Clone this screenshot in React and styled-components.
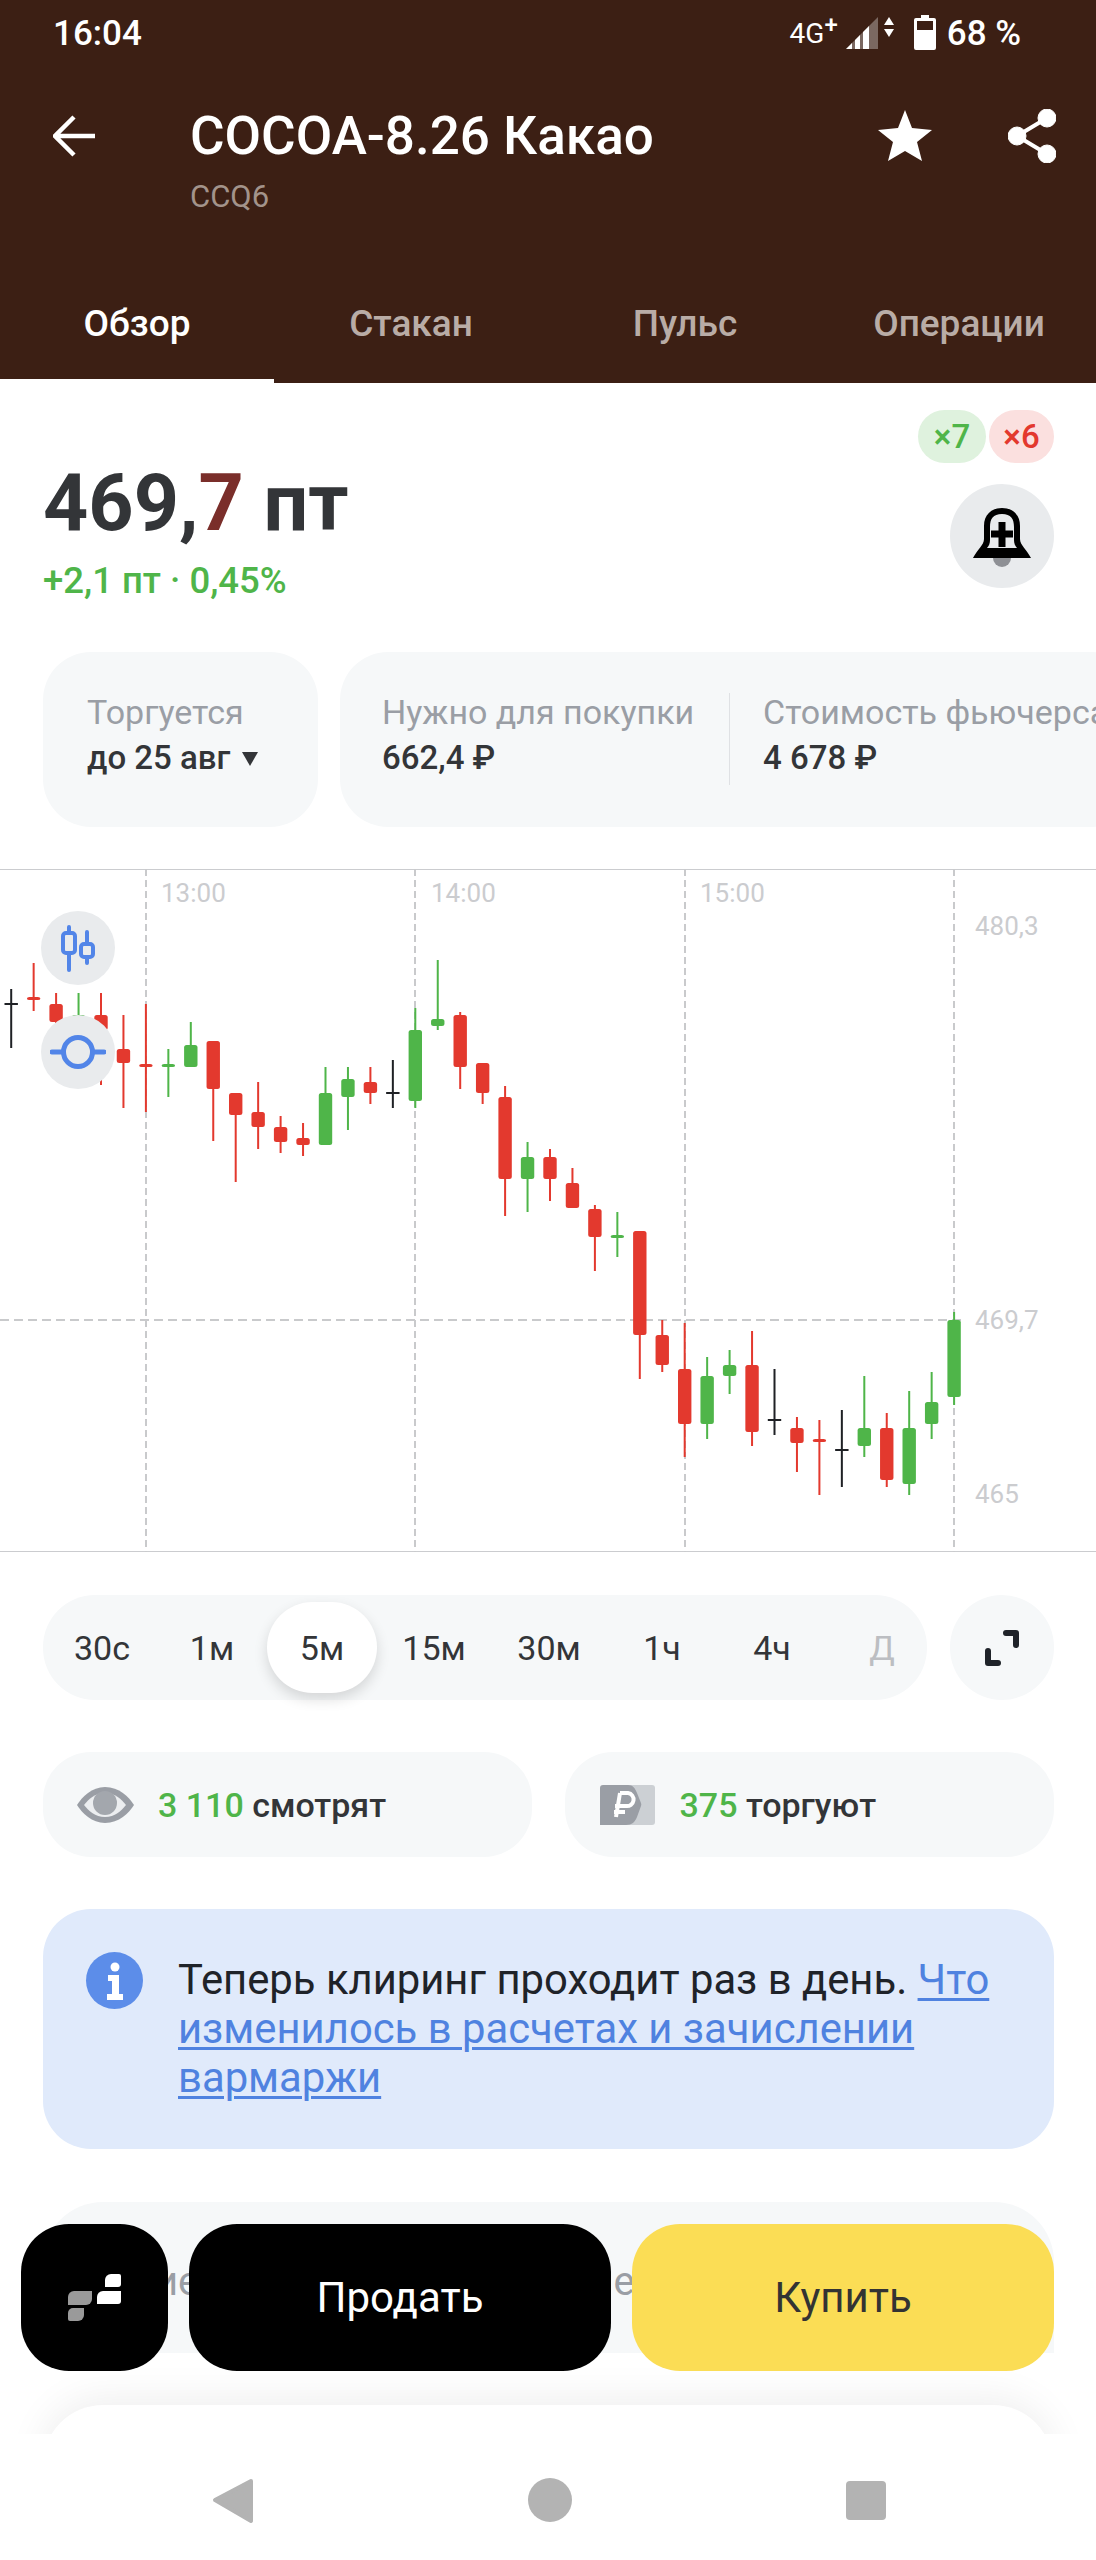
import React from 'react';
import styled, { createGlobalStyle } from 'styled-components';

const GlobalStyle = createGlobalStyle`
  html, body {
    margin: 0;
    padding: 0;
    background: #fff;
    font-family: Roboto, "Noto Sans", sans-serif;
  }
  * { box-sizing: border-box; }
`;

const BROWN = '#3c1f14';
const GREEN = '#4fb549';
const RED = '#e3392e';
const GRAY_BG = '#f6f8f9';

const Page = styled.div`
  position: relative;
  width: 1096px;
  height: 2560px;
  overflow: hidden;
  display: flex;
  flex-direction: column;
  background: #fff;
`;

const Scroll = styled.main`
  flex: 1;
  min-height: 0;
  overflow: hidden;
`;

const Header = styled.header`
  height: 383px;
  background: ${BROWN};
  color: #fff;
  display: flex;
  flex-direction: column;
`;

const StatusBar = styled.div`
  height: 66px;
  padding: 0 75px 0 53px;
  display: flex;
  align-items: center;
  justify-content: space-between;
  font-size: 35px;
  font-weight: 500;
`;

const StatusRight = styled.div`
  display: flex;
  align-items: center;
`;

const NetLabel = styled.span`
  font-size: 28px;
  font-weight: 400;
  margin-right: 8px;
  sup {
    font-size: 24px;
    line-height: 0;
    font-weight: 500;
  }
`;

const TitleBar = styled.div`
  height: 197px;
  padding: 42px 40px 0 53px;
  display: flex;
  align-items: flex-start;
`;

const BackButton = styled.div`
  width: 137px;
  height: 56px;
  flex: none;
  display: flex;
  align-items: center;
`;

const TitleBox = styled.div`
  flex: 1;
`;

const Title = styled.h1`
  margin: 0;
  font-size: 53px;
  line-height: 56px;
  font-weight: 500;
`;

const Ticker = styled.div`
  margin-top: 16px;
  font-size: 31px;
  line-height: 34px;
  color: #a3938b;
`;

const TitleActions = styled.div`
  display: flex;
  align-items: center;
  gap: 76px;
  height: 56px;
`;

const Tabs = styled.nav`
  position: relative;
  height: 120px;
  display: grid;
  grid-template-columns: repeat(4, 1fr);
`;

const Tab = styled.div`
  position: relative;
  display: flex;
  align-items: center;
  justify-content: center;
  font-size: 37px;
  font-weight: 500;
  color: ${p => (p.$active ? '#fff' : '#b9aca6')};
  &::after {
    content: '';
    display: ${p => (p.$active ? 'block' : 'none')};
    position: absolute;
    left: 0;
    right: 0;
    bottom: 0;
    height: 4px;
    background: #fff;
  }
`;

const Summary = styled.section`
  height: 269px;
  padding: 27px 42px 0 43px;
  display: flex;
  justify-content: space-between;
`;

const PriceBox = styled.div`
  padding-top: 48px;
`;

const Price = styled.div`
  font-size: 79px;
  line-height: 90px;
  font-weight: 700;
  color: #333538;
  span {
    color: #7a2e2a;
  }
`;

const Change = styled.div`
  margin-top: 13px;
  font-size: 36.5px;
  line-height: 40px;
  font-weight: 500;
  color: ${GREEN};
`;

const SideBox = styled.div`
  display: flex;
  flex-direction: column;
  align-items: flex-end;
  gap: 21px;
`;

const Badges = styled.div`
  display: flex;
  gap: 3px;
`;

const Badge = styled.div`
  width: ${p => (p.$up ? 68 : 65)}px;
  height: 53px;
  border-radius: 27px;
  display: flex;
  align-items: center;
  justify-content: center;
  font-size: 33px;
  font-weight: 500;
  color: ${p => (p.$up ? GREEN : RED)};
  background: ${p => (p.$up ? '#dff2de' : '#fbe0df')};
`;

const RoundButton = styled.div`
  width: 104px;
  height: ${p => p.$h || 104}px;
  border-radius: 52px;
  flex: none;
  display: flex;
  align-items: center;
  justify-content: center;
  background: ${p => p.$bg || '#e9ebed'};
`;

const InfoRow = styled.section`
  height: 175px;
  padding-left: 43px;
  display: flex;
  gap: 22px;
  overflow: hidden;
`;

const InfoCard = styled.div`
  flex: none;
  height: 175px;
  padding: 38px 0 0 ${p => p.$pad}px;
  width: ${p => p.$w}px;
  border-radius: 48px;
  background: ${GRAY_BG};
  display: flex;
`;

const InfoCell = styled.div`
  width: ${p => p.$w}px;
  flex: none;
  ${p => p.$split && `
    border-left: 1px solid #dfe1e4;
    padding-left: 33px;
    height: 92px;
    margin-top: 3px;
  `}
`;

const InfoLabel = styled.div`
  font-size: 34px;
  line-height: 45px;
  color: #9a9ea5;
  margin-top: ${p => (p.$split ? -3 : 0)}px;
  white-space: nowrap;
`;

const InfoValue = styled.div`
  font-size: 33px;
  line-height: 45px;
  font-weight: 500;
  color: #333538;
  white-space: nowrap;
  display: flex;
  align-items: center;
  gap: 12px;
`;

const Caret = styled.i`
  display: block;
  width: 0;
  height: 0;
  border-left: 8px solid transparent;
  border-right: 8px solid transparent;
  border-top: 14px solid #333538;
  margin-top: 2px;
`;

const ChartBox = styled.section`
  position: relative;
  height: 683px;
  margin-top: 42px;
`;

const ChartSvg = styled.svg`
  display: block;
  text {
    font-family: Roboto, sans-serif;
    font-size: 26px;
    fill: #cbcccf;
  }
`;

const ChartTool = styled.div`
  position: absolute;
  left: 41px;
  top: ${p => p.$top}px;
  width: 74px;
  height: 74px;
  border-radius: 50%;
  background: #e9ebed;
  display: flex;
  align-items: center;
  justify-content: center;
`;

const FrameRow = styled.section`
  margin-top: 43px;
  padding: 0 42px 0 43px;
  display: flex;
  justify-content: space-between;
`;

const FrameBar = styled.div`
  position: relative;
  width: 884px;
  height: 105px;
  padding: 7px 0 7px 4px;
  border-radius: 52px;
  background: ${GRAY_BG};
  display: flex;
`;

const FrameItem = styled.div`
  width: ${p => p.$w}px;
  flex: none;
  border-radius: 46px;
  display: flex;
  align-items: center;
  justify-content: center;
  font-size: 34px;
  color: ${p => (p.$muted ? '#bcbec2' : '#333538')};
  background: ${p => (p.$active ? '#fff' : 'transparent')};
  box-shadow: ${p => (p.$active ? '0 6px 14px rgba(0,0,0,.14)' : 'none')};
`;

const StatRow = styled.section`
  margin-top: 52px;
  padding: 0 42px 0 43px;
  display: flex;
  gap: 33px;
`;

const StatCard = styled.div`
  flex: 1;
  height: 105px;
  padding-left: ${p => p.$pad}px;
  border-radius: 48px;
  background: ${GRAY_BG};
  display: flex;
  align-items: center;
  gap: ${p => p.$gap}px;
  font-size: 34px;
  font-weight: 500;
  color: #333538;
  b {
    font-weight: 500;
    color: ${GREEN};
  }
`;

const Notice = styled.section`
  margin: 52px 42px 0 43px;
  height: 240px;
  padding: 43px 40px 0 43px;
  border-radius: 48px;
  background: #e0eafb;
  display: flex;
  gap: 35px;
`;

const NoticeIcon = styled.div`
  width: 57px;
  height: 57px;
  flex: none;
  border-radius: 50%;
  background: #5c8de9;
  display: flex;
  align-items: center;
  justify-content: center;
`;

const NoticeText = styled.p`
  margin: 3px 0 0;
  font-size: 41.8px;
  line-height: 49px;
  color: #1f2329;
  a {
    color: #4f82e0;
    text-decoration: underline;
    text-underline-offset: 4px;
    text-decoration-thickness: 3px;
  }
`;

const Peek = styled.section`
  margin: 53px 42px 0 43px;
  height: 151px;
  padding-top: 56px;
  border-radius: 60px 60px 0 0;
  background: ${GRAY_BG};
  display: flex;
  font-size: 40px;
  color: #9a9ea5;
`;

const PeekWord = styled.span`
  margin-left: ${p => p.$left}px;
  white-space: nowrap;
`;

const BelowCard = styled.section`
  position: relative;
  margin: 52px 43px 0;
  height: 120px;
  border-radius: 60px 60px 0 0;
  background: #fff;
  box-shadow: 0 -6px 40px rgba(0, 0, 0, 0.07);
`;

const ActionBar = styled.div`
  position: absolute;
  left: 21px;
  right: 42px;
  top: 2224px;
  height: 147px;
  display: flex;
  gap: 21px;
`;

const ActionButton = styled.div`
  flex: ${p => (p.$logo ? '0 0 147px' : 1)};
  border-radius: 48px;
  display: flex;
  align-items: center;
  justify-content: center;
  font-size: 42px;
  color: ${p => (p.$buy ? '#333' : '#fff')};
  background: ${p => (p.$buy ? '#fbdd55' : '#000')};
`;

const SystemNav = styled.nav`
  position: relative;
  height: 126px;
  flex: none;
  background: #fff;
  padding-top: 44px;
`;

const NavSvg = styled.svg`
  display: block;
`;

const candles = [
  ['k', 989, 1048, 1004, 1004], ['r', 963, 1011, 997, 1000], ['r', 993, 1023, 1004, 1022],
  ['g', 993, 1030, 1015, 1022], ['r', 993, 1085, 1015, 1030], ['r', 1015, 1108, 1049, 1063],
  ['r', 1004, 1112, 1064, 1067], ['g', 1049, 1097, 1064, 1067], ['g', 1022, 1067, 1045, 1067],
  ['r', 1041, 1141, 1041, 1089], ['r', 1093, 1182, 1093, 1115], ['r', 1082, 1149, 1112, 1127],
  ['r', 1116, 1153, 1127, 1142], ['r', 1123, 1156, 1138, 1145], ['g', 1067, 1145, 1093, 1145],
  ['g', 1067, 1130, 1079, 1097], ['r', 1067, 1104, 1082, 1093], ['k', 1060, 1108, 1093, 1093],
  ['g', 1008, 1108, 1030, 1101], ['g', 960, 1030, 1019, 1026], ['r', 1012, 1089, 1015, 1067],
  ['r', 1063, 1104, 1063, 1093], ['r', 1086, 1216, 1097, 1179], ['g', 1142, 1212, 1157, 1179],
  ['r', 1149, 1201, 1157, 1179], ['r', 1168, 1208, 1183, 1208], ['r', 1205, 1271, 1209, 1237],
  ['g', 1212, 1257, 1235, 1238], ['r', 1231, 1379, 1231, 1335], ['r', 1320, 1372, 1335, 1365],
  ['r', 1323, 1457, 1369, 1424], ['g', 1357, 1439, 1376, 1424], ['g', 1350, 1394, 1365, 1376],
  ['r', 1331, 1446, 1365, 1432], ['k', 1369, 1435, 1420, 1420], ['r', 1417, 1472, 1428, 1443],
  ['r', 1420, 1495, 1439, 1442], ['k', 1410, 1487, 1450, 1450], ['g', 1376, 1457, 1428, 1446],
  ['r', 1413, 1487, 1428, 1480], ['g', 1391, 1495, 1428, 1484], ['g', 1372, 1439, 1402, 1424],
  ['g', 1312, 1405, 1320, 1397],
];

const candleColor = { r: RED, g: GREEN, k: '#1f2125' };
const CHART_TOP = 869;

function Chart() {
  const grid = [146, 415, 685, 954];
  return (
    <ChartSvg width="1096" height="683" viewBox="0 0 1096 683">
      <line x1="0" x2="1096" y1="0.5" y2="0.5" stroke="#cbcccf" />
      <line x1="0" x2="1096" y1="682.5" y2="682.5" stroke="#cbcccf" />
      {grid.map(x => (
        <line key={x} x1={x} x2={x} y1="0" y2="683" stroke="#c9cacc" strokeWidth="2" strokeDasharray="7 4" />
      ))}
      <line x1="0" x2="965" y1="451" y2="451" stroke="#c9cacc" strokeWidth="2" strokeDasharray="9 5" />
      <text x="161" y="33">13:00</text>
      <text x="431" y="33">14:00</text>
      <text x="700" y="33">15:00</text>
      <text x="975" y="66">480,3</text>
      <text x="975" y="460">469,7</text>
      <text x="975" y="634">465</text>
      {candles.map(([c, hi, lo, open, close], i) => {
        const x = 11.2 + i * 22.45;
        const flat = close - open < 1;
        return (
          <g key={i} fill={candleColor[c]}>
            <rect x={x - 1} y={hi - CHART_TOP} width="2" height={lo - hi} />
            <rect
              x={x - 6.7}
              y={open - CHART_TOP - (flat ? 1 : 0)}
              width="13.4"
              height={flat ? 2 : close - open}
              rx={flat ? 0 : 2.5}
            />
          </g>
        );
      })}
    </ChartSvg>
  );
}

export default function App() {
  return (
    <Page>
      <GlobalStyle />
      <Scroll>
        <Header>
          <StatusBar>
            <span>16:04</span>
            <StatusRight>
              <NetLabel>4G<sup>+</sup></NetLabel>
              <svg width="50" height="36" viewBox="0 0 50 36">
                <path d="M0 34 L32 2 V34 Z" fill="#7b6861" />
                <path d="M0 34 L6 28 V34 Z M9 25 L14 20 V34 H9 Z M17 17 L23 11 V34 H17 Z" fill="#fff" />
                <path d="M38 10 L43 2 L48 10 Z M38 14 L48 14 L43 22 Z" fill="#fff" />
              </svg>
              <svg width="22" height="36" viewBox="0 0 22 36" style={{ margin: '0 11px 0 18px' }}>
                <path d="M7 0 H15 V3 H20 a2 2 0 0 1 2 2 V33 a2 2 0 0 1 -2 2 H2 a2 2 0 0 1 -2 -2 V5 a2 2 0 0 1 2 -2 H7 Z" fill="#fff" />
                <rect x="3" y="6" width="16" height="9" fill={BROWN} />
              </svg>
              <span>68 %</span>
            </StatusRight>
          </StatusBar>
          <TitleBar>
            <BackButton>
              <svg width="42" height="42" viewBox="0 0 42 42" fill="none" stroke="#fff" strokeWidth="4.5">
                <path d="M42 21 H3 M21 2 L2 21 L21 40" />
              </svg>
            </BackButton>
            <TitleBox>
              <Title>COCOA-8.26 Какао</Title>
              <Ticker>CCQ6</Ticker>
            </TitleBox>
            <TitleActions>
              <svg width="54" height="52" viewBox="0 0 54 52">
                <path d="M27 0 L34 18 L54 20 L39 32 L44 51 L27 41 L10 51 L15 32 L0 20 L20 18 Z" fill="#fff" />
              </svg>
              <svg width="48" height="54" viewBox="0 0 48 54" fill="#fff" stroke="#fff">
                <circle cx="39" cy="9" r="9" />
                <circle cx="9" cy="27" r="9" />
                <circle cx="39" cy="45" r="9" />
                <path d="M39 9 L9 27 L39 45" fill="none" strokeWidth="4" />
              </svg>
            </TitleActions>
          </TitleBar>
          <Tabs>
            <Tab $active>Обзор</Tab>
            <Tab>Стакан</Tab>
            <Tab>Пульс</Tab>
            <Tab>Операции</Tab>
          </Tabs>
        </Header>

        <Summary>
          <PriceBox>
            <Price>469,<span>7</span> пт</Price>
            <Change>+2,1 пт · 0,45%</Change>
          </PriceBox>
          <SideBox>
            <Badges>
              <Badge $up>×7</Badge>
              <Badge>×6</Badge>
            </Badges>
            <RoundButton>
              <svg width="60" height="62" viewBox="0 0 60 62">
                <circle cx="30" cy="53" r="9" fill="#8e9095" />
                <path d="M30 3 C19 3 12 10 12 21 V34 C12 40 5 45 1 53 H59 C55 45 48 40 48 34 V21 C48 10 41 3 30 3 Z" fill="#000" />
                <path d="M30 9 C21 9 18 14 18 22 V35 C18 38 17 41 15 43 H45 C43 41 42 38 42 35 V22 C42 14 39 9 30 9 Z" fill="#e9ebed" />
                <path d="M26.5 17 H33.5 V25.5 H41 V32.5 H33.5 V42 H26.5 V32.5 H19 V25.5 H26.5 Z" fill="#000" />
              </svg>
            </RoundButton>
          </SideBox>
        </Summary>

        <InfoRow>
          <InfoCard $w={275} $pad={44}>
            <InfoCell>
              <InfoLabel>Торгуется</InfoLabel>
              <InfoValue>до 25 авг <Caret /></InfoValue>
            </InfoCell>
          </InfoCard>
          <InfoCard $w={800} $pad={42}>
            <InfoCell $w={347}>
              <InfoLabel>Нужно для покупки</InfoLabel>
              <InfoValue>662,4 ₽</InfoValue>
            </InfoCell>
            <InfoCell $split $w={400}>
              <InfoLabel $split>Стоимость фьючерса</InfoLabel>
              <InfoValue>4 678 ₽</InfoValue>
            </InfoCell>
          </InfoCard>
        </InfoRow>

        <ChartBox>
          <Chart />
          <ChartTool $top={42}>
            <svg width="36" height="48" viewBox="0 0 36 48" fill="none" stroke="#5285e8" strokeWidth="4" strokeLinecap="round">
              <path d="M9 3 V9 M9 29 V46 M27 8 V20 M27 33 V39" />
              <rect x="3" y="9" width="12" height="20" rx="3" />
              <rect x="21" y="20" width="12" height="13" rx="3" />
            </svg>
          </ChartTool>
          <ChartTool $top={146}>
            <svg width="56" height="36" viewBox="0 0 56 36" fill="none" stroke="#5285e8" strokeWidth="5" strokeLinecap="round">
              <circle cx="28" cy="18" r="14.5" />
              <path d="M2 18 H13 M43 18 H54" />
            </svg>
          </ChartTool>
        </ChartBox>

        <FrameRow>
          <FrameBar>
            {[['30с', 110], ['1м', 110], ['5м', 110, 'active'], ['15м', 114], ['30м', 116], ['1ч', 110], ['4ч', 110], ['Д', 110, 'muted']].map(([label, w, state]) => (
              <FrameItem key={label} $w={w} $active={state === 'active'} $muted={state === 'muted'}>{label}</FrameItem>
            ))}
          </FrameBar>
          <RoundButton $h={105} $bg={GRAY_BG}>
            <svg width="36" height="38" viewBox="0 0 36 38" fill="none" stroke="#1f2329" strokeWidth="6" strokeLinecap="round" strokeLinejoin="round">
              <path d="M22 4 H32 V16 M4 22 V34 H14" />
            </svg>
          </RoundButton>
        </FrameRow>

        <StatRow>
          <StatCard $pad={34} $gap={24}>
            <svg width="57" height="36" viewBox="0 0 57 36">
              <path d="M28 0 C42 0 52 10 57 18 C52 26 42 36 28 36 C15 36 5 26 0 18 C5 10 15 0 28 0 Z" fill="#9a9ea5" />
              <path d="M28 6 C38 6 44 12 49 18 C44 24 38 30 28 30 C18 30 12 24 7 18 C12 12 18 6 28 6 Z" fill="#eceef0" />
              <circle cx="28" cy="16" r="12" fill="#a3a7ad" />
            </svg>
            <span><b>3 110</b> смотрят</span>
          </StatCard>
          <StatCard $pad={35} $gap={25}>
            <svg width="55" height="40" viewBox="0 0 55 40">
              <path d="M28 0 H52 a3 3 0 0 1 3 3 V37 a3 3 0 0 1 -3 3 H22 Z" fill="#ccd0d4" />
              <path d="M0 3 a3 3 0 0 1 3 -3 H28 C33 0 35 3 37 8 L41 18 a4 4 0 0 1 0 3 L37 32 C35 37 32 40 26 40 H0 Z" fill="#9a9ea5" />
              <path d="M20 8 H28 a5.5 5.5 0 0 1 -2 13 H15 M20 8 L16 32 M14 27 H25" fill="none" stroke="#fff" strokeWidth="4" />
            </svg>
            <span><b>375</b> торгуют</span>
          </StatCard>
        </StatRow>

        <Notice>
          <NoticeIcon>
            <svg width="18" height="40" viewBox="0 0 18 40" fill="#fff">
              <circle cx="9" cy="6" r="4.5" />
              <path d="M2 14 H13 V33 H17 V39 H1 V33 H6 V20 H2 Z" />
            </svg>
          </NoticeIcon>
          <NoticeText>
            Теперь клиринг проходит раз в день. <a>Что изменилось в расчетах и зачислении вармаржи</a>
          </NoticeText>
        </Notice>

        <Peek>
          <PeekWord $left={112}>ие</PeekWord>
          <PeekWord $left={391}>ие</PeekWord>
        </Peek>
        <BelowCard />
      </Scroll>

      <ActionBar>
        <ActionButton $logo>
          <svg width="53" height="47" viewBox="0 0 53 47">
            <path d="M43 0 H51 a2 2 0 0 1 2 2 V10 a3 3 0 0 1 -3 3 H37 V6 a6 6 0 0 1 6 -6 Z" fill="#fff" />
            <path d="M35 17 H53 V27 a3 3 0 0 1 -3 3 H29 V23 a6 6 0 0 1 6 -6 Z" fill="#fff" />
            <path d="M6 17 H24 V25 a6 6 0 0 1 -6 6 H0 V23 a6 6 0 0 1 6 -6 Z" fill="#9a9a9a" />
            <path d="M5 34 H16 V41 a6 6 0 0 1 -6 6 H2 a2 2 0 0 1 -2 -2 V39 a5 5 0 0 1 5 -5 Z" fill="#9a9a9a" />
          </svg>
        </ActionButton>
        <ActionButton>Продать</ActionButton>
        <ActionButton $buy>Купить</ActionButton>
      </ActionBar>

      <SystemNav>
        <NavSvg width="1096" height="50" viewBox="0 0 1096 50">
          <path d="M251 3 L215 22 L251 43 Z" fill="#b3b3b3" stroke="#b3b3b3" strokeWidth="4" strokeLinejoin="round" />
          <circle cx="550" cy="22" r="22" fill="#b3b3b3" />
          <rect x="846" y="3" width="40" height="39" rx="4" fill="#b3b3b3" />
        </NavSvg>
      </SystemNav>
    </Page>
  );
}
